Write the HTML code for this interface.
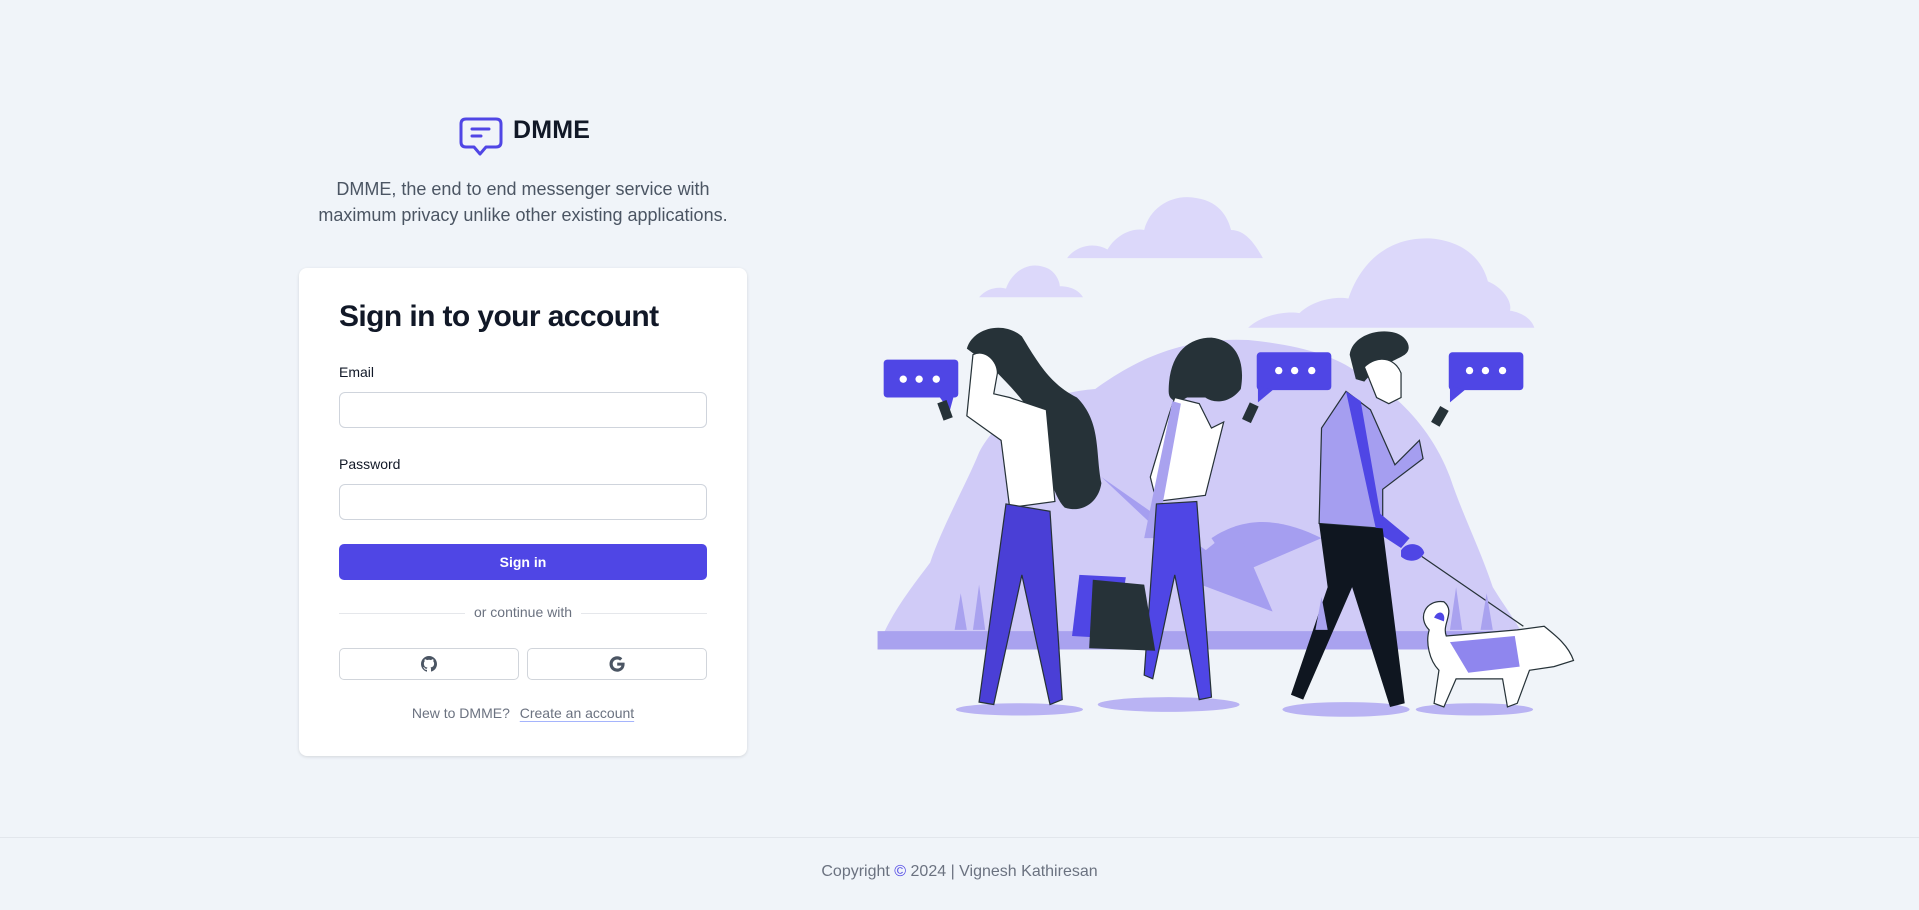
<!DOCTYPE html>
<html><head><meta charset="utf-8"><style>
*{box-sizing:border-box;margin:0;padding:0}
body{width:1919px;height:910px;background:#f0f4f9;font-family:"Liberation Sans",Arial,sans-serif;position:relative;overflow:hidden;color:#111827}
.abs{position:absolute}
.logo{left:459px;top:116px}
.brand{left:513px;top:116px;font-size:25px;font-weight:bold;color:#111827;letter-spacing:.2px}
.tag{left:279px;width:488px;top:176px;text-align:center;font-size:18px;line-height:26px;color:#4b5563}
.card{left:299px;top:268px;width:448px;height:488px;background:#fff;border-radius:8px;box-shadow:0 1px 3px rgba(0,0,0,.12)}
h1{position:absolute;left:40px;top:32px;font-size:30px;font-weight:bold;letter-spacing:-.6px;color:#111827}
.lbl{position:absolute;left:40px;font-size:14px;color:#111827}
.inp{position:absolute;left:40px;width:368px;height:36px;border:1px solid #cfd4dc;border-radius:6px;background:#fff}
.btn{position:absolute;left:40px;top:276px;width:368px;height:36px;background:#4f46e5;border-radius:5px;color:#fff;font-size:14px;font-weight:bold;text-align:center;line-height:36px}
.div{position:absolute;left:40px;top:345px;width:368px;height:1px;background:#e5e7eb}
.divt{position:absolute;left:0;width:448px;top:336px;text-align:center;font-size:14px;color:#6b7280}
.divt span{background:#fff;padding:0 9px}
.sb{position:absolute;top:380px;width:180px;height:32px;border:1px solid #d1d5db;border-radius:5px;display:flex;align-items:center;justify-content:center}
.new{position:absolute;left:0;width:448px;top:437px;text-align:center;font-size:14px;color:#6b7280}
.new u{text-decoration:underline;text-decoration-color:#a5b4fc;text-underline-offset:3px;margin-left:6px}
.foot{left:0;top:837px;width:1919px;height:73px;border-top:1px solid #e2e6ec;text-align:center;font-size:16px;color:#6b7280;line-height:68px}
</style></head><body>
<svg class="abs" style="left:0;top:0" width="1919" height="910" viewBox="0 0 1568 744">
<g fill="#dcd8fa">
<path d="M872 211 C880 200 895 198 905 204 C912 192 925 186 935 188 C940 168 960 158 978 162 C998 165 1004 180 1006 188 C1018 188 1026 200 1032 211 Z"/>
<path d="M800 243 C806 236 815 234 822 236 C826 224 838 214 852 218 C862 220 866 230 866 234 C876 234 882 238 885 243 Z"/>
<path d="M1020 268 C1030 258 1050 254 1062 256 C1072 246 1090 242 1102 244 C1110 220 1130 193 1170 195 C1200 198 1212 215 1216 230 C1230 236 1236 248 1234 254 C1246 256 1252 262 1254 268 Z"/>
</g>
<path fill="#d0cbf7" d="M717 531 C725 505 745 480 760 460 C770 430 790 395 800 370 C820 330 870 320 895 318 C920 300 960 275 1020 278 C1060 282 1090 290 1110 305 C1140 320 1170 350 1185 390 C1195 420 1210 450 1220 480 C1232 500 1245 515 1250 531 Z"/>
<rect x="717" y="516" width="533" height="15" fill="#a9a2ef"/>
<g fill="#a59ef0"><path d="M900 390 L985 470 L1000 460 Z"/><path d="M990 440 C1020 420 1050 425 1080 440 L1010 470 Z"/><path d="M960 470 L1010 430 L1040 500 Z"/></g>
<g fill="#b9b3f3"><ellipse cx="833" cy="580" rx="52" ry="5"/><ellipse cx="955" cy="576" rx="58" ry="6"/><ellipse cx="1100" cy="580" rx="52" ry="6"/><ellipse cx="1205" cy="580" rx="48" ry="5"/></g>
<g fill="#4f46e5">
<rect x="722" y="294" width="61" height="31" rx="3"/><path d="M768 325 L776 336 L779 325 Z"/>
<rect x="1027" y="288" width="61" height="31" rx="3"/><path d="M1028 315 L1028 329 L1040 319 Z"/>
<rect x="1184" y="288" width="61" height="31" rx="3"/><path d="M1185 315 L1185 329 L1197 319 Z"/>
</g>
<g fill="#fff"><circle cx="738" cy="310" r="3"/><circle cx="751" cy="310" r="3"/><circle cx="765" cy="310" r="3"/><circle cx="1045" cy="303" r="3"/><circle cx="1058" cy="303" r="3"/><circle cx="1072" cy="303" r="3"/><circle cx="1201" cy="303" r="3"/><circle cx="1214" cy="303" r="3"/><circle cx="1228" cy="303" r="3"/></g>
<path fill="#263238" d="M790 285 C795 268 820 262 835 275 C850 300 860 315 880 325 C900 345 895 370 900 395 C898 410 885 420 870 415 C860 405 855 380 850 350 C840 330 825 315 810 300 Z"/>
<path fill="#fff" stroke="#263238" stroke-width="1" d="M795 290 C805 285 815 295 815 305 L812 322 L825 325 L855 335 L862 410 L825 415 L818 360 L790 340 Z"/>
<path fill="#4a3fd6" stroke="#263238" stroke-width="1" d="M822 412 L858 418 L868 572 L858 576 L835 470 L812 576 L800 574 Z"/>
<rect x="768" y="328" width="8" height="15" fill="#263238" transform="rotate(-20 772 335)"/>
<path fill="#263238" d="M955 320 C955 290 970 276 990 276 C1010 278 1018 295 1014 318 C1005 330 992 330 985 325 L970 325 C962 330 955 328 955 320 Z"/>
<path fill="#fff" stroke="#263238" stroke-width="1" d="M960 325 L980 330 L990 350 L1000 345 L985 405 L945 410 L940 390 L955 340 Z"/>
<path fill="#a9a2ef" d="M958 328 L965 330 L945 440 L935 440 Z"/>
<path fill="#4f46e5" stroke="#263238" stroke-width="1" d="M945 412 L978 410 L990 570 L980 572 L960 470 L942 555 L935 552 Z"/>
<path fill="#4f46e5" d="M882 470 L920 472 L912 522 L876 520 Z"/>
<path fill="#263238" d="M893 474 L935 478 L944 532 L890 530 Z"/>
<rect x="1018" y="330" width="8" height="15" fill="#263238" transform="rotate(25 1022 337)"/>
<path fill="#263238" d="M1103 290 C1105 275 1125 268 1140 272 C1150 275 1155 285 1148 290 C1140 295 1125 300 1115 312 L1108 310 Z"/>
<path fill="#fff" stroke="#263238" stroke-width="1" d="M1115 300 C1125 290 1140 292 1145 305 L1145 325 L1135 330 L1125 325 Z"/>
<path fill="#a59ef0" stroke="#263238" stroke-width="1" d="M1100 320 L1120 335 L1140 380 L1160 360 L1163 375 L1130 400 L1130 432 L1078 428 L1080 350 Z"/>
<path fill="#4f46e5" d="M1100 320 L1112 328 L1128 420 L1152 440 L1145 448 L1125 435 Z"/>
<path fill="#0f1620" d="M1078 428 L1130 432 L1148 575 L1136 578 L1105 480 L1065 572 L1055 568 L1085 480 Z"/>
<rect x="1173" y="333" width="8" height="15" fill="#263238" transform="rotate(30 1177 340)"/>
<path fill="#4f46e5" d="M1145 450 C1150 442 1162 444 1164 452 C1160 460 1150 460 1145 455 Z"/>
<path stroke="#263238" stroke-width="1" fill="none" d="M1162 455 L1245 512"/>
<path fill="#fff" stroke="#263238" stroke-width="1" d="M1168 515 C1158 505 1165 490 1180 492 C1190 500 1178 510 1182 520 L1240 515 L1262 512 C1272 520 1282 528 1286 540 L1270 545 L1250 548 L1240 575 L1232 578 L1228 555 L1190 555 L1180 578 L1172 575 L1176 548 C1168 540 1165 525 1168 515 Z"/>
<path fill="#8f86ee" d="M1185 525 L1238 520 L1242 545 L1200 550 Z"/>
<path fill="#4f46e5" d="M1172 505 C1175 498 1182 500 1180 508 Z"/>
<g fill="#a9a2ef"><path d="M780 515 L785 485 L790 515 Z"/><path d="M795 515 L800 478 L805 515 Z"/><path d="M1075 515 L1080 488 L1085 515 Z"/><path d="M1185 515 L1190 480 L1195 515 Z"/><path d="M1210 515 L1215 485 L1220 515 Z"/></g>
</svg>

<svg class="abs logo" width="44" height="42" viewBox="0 0 44 42"><path d="M7 3 H37 Q42 3 42 8 V26 Q42 31 37 31 H27 L21 38 L15 31 H7 Q2 31 2 26 V8 Q2 3 7 3 Z" fill="none" stroke="#5046e5" stroke-width="3" stroke-linejoin="round"/><path d="M13 13 H30 M13 20 H22" stroke="#5046e5" stroke-width="3" stroke-linecap="round"/></svg>
<div class="abs brand">DMME</div>
<div class="abs tag">DMME, the end to end messenger service with<br>maximum privacy unlike other existing applications.</div>

<div class="abs card">
<h1>Sign in to your account</h1>
<div class="lbl" style="top:96px">Email</div>
<div class="inp" style="top:124px"></div>
<div class="lbl" style="top:188px">Password</div>
<div class="inp" style="top:216px"></div>
<div class="btn">Sign in</div>
<div class="div"></div>
<div class="divt"><span>or continue with</span></div>
<div class="sb" style="left:40px"><svg width="16" height="16" viewBox="0 0 16 16"><path fill="#4b5563" d="M8 0C3.6 0 0 3.6 0 8c0 3.5 2.3 6.5 5.5 7.6.4.1.5-.2.5-.4v-1.4c-2.2.5-2.7-1-2.7-1-.4-.9-.9-1.2-.9-1.2-.7-.5.1-.5.1-.5.8.1 1.2.8 1.2.8.7 1.2 1.900.9 2.3.7.1-.5.3-.9.5-1.1-1.8-.2-3.6-.9-3.6-4 0-.9.3-1.6.8-2.1-.1-.2-.4-1 .1-2.1 0 0 .7-.2 2.2.8.6-.2 1.3-.3 2-.3s1.4.1 2 .3c1.5-1 2.2-.8 2.2-.8.4 1.1.2 1.9.1 2.1.5.6.8 1.3.8 2.1 0 3.1-1.9 3.7-3.6 3.9.3.3.5.8.5 1.5v2.2c0 .2.1.5.6.4C13.7 14.5 16 11.5 16 8c0-4.400-3.6-8-8-8z"/></svg></div>
<div class="sb" style="left:228px"><svg width="16" height="16" viewBox="0 0 16 16"><path fill="#4b5563" d="M15.6 6.6H8.2v3h4.2c-.4 1.9-2 2.9-4.2 2.9-2.5 0-4.5-2-4.5-4.5s2-4.5 4.5-4.5c1.1 0 2.1.4 2.9 1.1l2.2-2.2C11.9 1 10.1.3 8.2.3 3.9.3.5 3.7.5 8s3.4 7.7 7.700 7.7c3.9 0 7.4-2.8 7.4-7.7 0-.5 0-1-.1-1.4z"/></svg></div>
<div class="new">New to DMME? <u>Create an account</u></div>
</div>

<div class="abs foot">Copyright <span style="color:#4f46e5">©</span> 2024 | Vignesh Kathiresan</div>
</body></html>
